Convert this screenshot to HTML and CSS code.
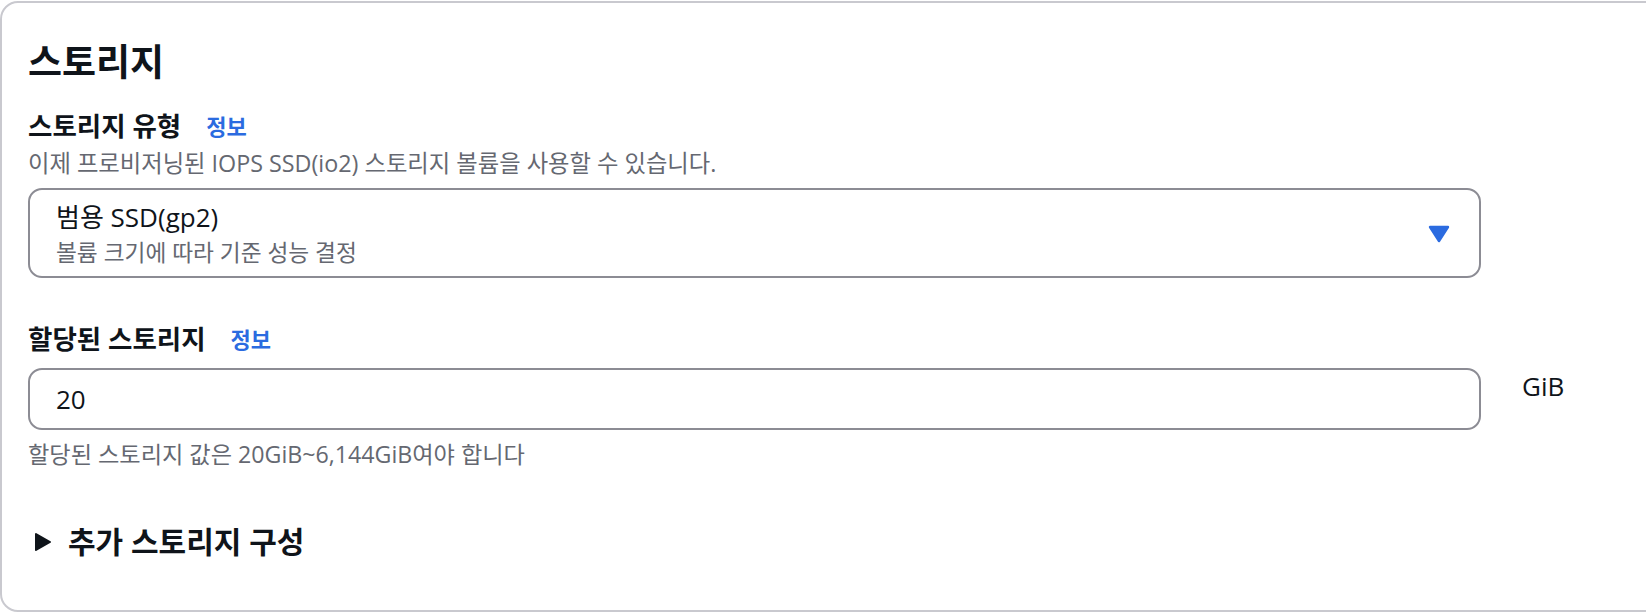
FILE: index.html
```html
<!DOCTYPE html>
<html lang="ko">
<head>
<meta charset="utf-8">
<title>스토리지</title>
<link rel="stylesheet" href="styles.css">
</head>
<body>
<section class="card">
  <h2 class="title">스토리지</h2>

  <div class="field field-type">
    <div class="label-row">
      <span class="label">스토리지 유형</span>
      <a class="info" href="#">정보</a>
    </div>
    <div class="desc">이제 프로비저닝된 IOPS SSD(io2) 스토리지 볼륨을 사용할 수 있습니다.</div>
    <div class="select">
      <div class="select-text">
        <div class="select-main">범용 SSD(gp2)</div>
        <div class="select-sub">볼륨 크기에 따라 기준 성능 결정</div>
      </div>
      <svg class="caret" width="22" height="18" viewBox="0 0 22 18" aria-hidden="true">
        <path d="M2 2 L20 2 L11 16 Z" fill="#2b6be0" stroke="#2b6be0" stroke-width="2.4" stroke-linejoin="round"/>
      </svg>
    </div>
  </div>

  <div class="field field-size">
    <div class="label-row">
      <span class="label">할당된 스토리지</span>
      <a class="info" href="#">정보</a>
    </div>
    <div class="input-row">
      <div class="input">20</div>
      <div class="unit">GiB</div>
    </div>
    <div class="hint">할당된 스토리지 값은 20GiB~6,144GiB여야 합니다</div>
  </div>

  <div class="expander">
    <svg class="expander-icon" width="18" height="20" viewBox="0 0 18 20" aria-hidden="true">
      <path d="M2 2 L16 10 L2 18 Z" fill="#0f141a" stroke="#0f141a" stroke-width="2" stroke-linejoin="round"/>
    </svg>
    <span class="expander-text">추가 스토리지 구성</span>
  </div>
</section>
</body>
</html>
```

FILE: styles.css
```css
html, body {
  margin: 0;
  padding: 0;
  background: #ffffff;
  overflow: hidden;
}

body {
  font-family: "Open Sans", "Noto Sans CJK KR", sans-serif;
  color: #0f141a;
}

.card {
  box-sizing: border-box;
  width: 1720px;
  height: 611px;
  margin-top: 1px;
  border: 2px solid #c9c9cf;
  border-radius: 18px;
  padding: 37px 0 0 26px;
  background: #ffffff;
}

.title {
  margin: 0;
  font-size: 37px;
  line-height: 44px;
  font-weight: 700;
}

.field-type {
  margin-top: 25px;
}

.label-row {
  display: flex;
  align-items: center;
  gap: 25px;
  height: 34px;
}

.label {
  font-size: 26.5px;
  line-height: 34px;
  font-weight: 700;
}

.info {
  font-size: 22px;
  line-height: 34px;
  font-weight: 700;
  color: #2b6be0;
  text-decoration: none;
}

.desc {
  font-size: 23.3px;
  line-height: 40px;
  color: #656871;
}

.select {
  box-sizing: border-box;
  width: 1453px;
  height: 90px;
  margin-top: 5px;
  border: 2px solid #8c8c94;
  border-radius: 14px;
  padding: 8px 29px 6px 26px;
  display: flex;
  align-items: center;
  justify-content: space-between;
}

.select-text {
  display: flex;
  flex-direction: column;
  align-self: stretch;
}

.select-main {
  font-size: 26px;
  line-height: 38px;
}

.select-sub {
  font-size: 22.7px;
  line-height: 34px;
  color: #656871;
}

.caret {
  display: block;
  flex: none;
}

.field-size {
  margin-top: 44px;
}

.input-row {
  display: flex;
  align-items: flex-start;
  gap: 41px;
  margin-top: 12px;
}

.input {
  box-sizing: border-box;
  width: 1453px;
  height: 62px;
  border: 2px solid #8c8c94;
  border-radius: 14px;
  padding: 0 26px;
  font-size: 26px;
  line-height: 58px;
}

.unit {
  font-size: 26px;
  line-height: 36px;
}

.hint {
  margin-top: 6px;
  font-size: 23.2px;
  line-height: 36px;
  color: #656871;
}

.expander {
  display: flex;
  align-items: center;
  gap: 16px;
  margin-top: 50px;
  height: 40px;
  padding-left: 6px;
}

.expander-icon {
  display: block;
  flex: none;
}

.expander-text {
  font-size: 30px;
  line-height: 40px;
  font-weight: 700;
}
```
